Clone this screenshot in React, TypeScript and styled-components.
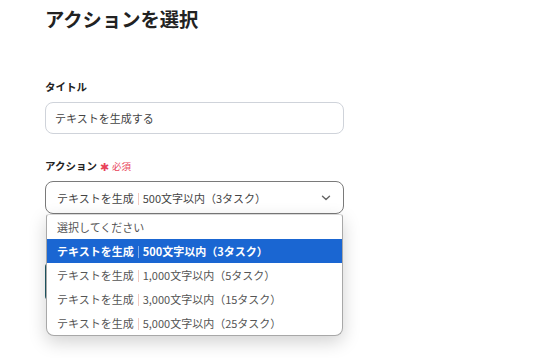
import React from "react";
import styled, { createGlobalStyle } from "styled-components";

const Global = createGlobalStyle`
  html, body { margin: 0; padding: 0; background: #fff; min-height: 100%; }
  body { font-family: "Noto Sans CJK JP", "Noto Sans", sans-serif; color: #222; }
`;

const Page = styled.div`
  padding: 5px 0 0 45px;
  width: 344px;
  min-height: 358px;
  box-sizing: border-box;
`;

const Heading = styled.h1`
  margin: 0;
  font-size: 19.3px;
  line-height: 28px;
  font-weight: 700;
  color: #222;
`;

const Field = styled.div<{ $top: number }>`
  margin-top: ${(p) => p.$top}px;
  display: flex;
  flex-direction: column;
`;

const Label = styled.div`
  font-size: 10.5px;
  line-height: 16px;
  font-weight: 700;
  color: #222;
  display: flex;
  align-items: center;
  gap: 3px;
`;

const Required = styled.span`
  color: #e8435a;
  font-size: 9.5px;
  font-weight: 400;
  display: flex;
  align-items: center;
  gap: 3px;
`;

const Star = styled.span`
  font-size: 11px;
  line-height: 1;
`;

const Input = styled.div`
  margin-top: 7px;
  height: 32px;
  box-sizing: border-box;
  border: 1px solid #cfd3da;
  border-radius: 8px;
  padding: 0 9px;
  display: flex;
  align-items: center;
  font-size: 11px;
  color: #444;
`;

const SelectWrap = styled.div`
  position: relative;
  margin-top: 7px;
`;

const Select = styled.div`
  height: 33px;
  box-sizing: border-box;
  border: 1px solid #7a7a7a;
  border-radius: 8px;
  padding: 0 12px 0 11px;
  display: flex;
  align-items: center;
  justify-content: space-between;
  font-size: 11px;
  color: #444;
`;

const Sep = styled.span<{ $light?: boolean }>`
  display: inline-block;
  width: 1px;
  height: 12px;
  margin: 0 4px;
  vertical-align: -2px;
  background: ${(p) => (p.$light ? "rgba(255,255,255,0.45)" : "#f2c9c0")};
`;

const TealButton = styled.div`
  margin-top: 49px;
  width: 120px;
  height: 37px;
  background: #1f5a66;
  border-radius: 4px;
`;

const Menu = styled.div`
  position: absolute;
  z-index: 5;
  left: 1px;
  right: 1px;
  top: 33px;
  background: #fff;
  border: 1px solid #a8a8a8;
  border-top-color: #d8d8d8;
  border-radius: 3px 3px 8px 8px;
  box-shadow: 0 6px 18px rgba(0, 0, 0, 0.18);
  overflow: hidden;
  display: flex;
  flex-direction: column;
`;

const Option = styled.div<{ $active?: boolean }>`
  height: 24px;
  flex: none;
  display: flex;
  align-items: center;
  padding: 0 10px;
  font-size: 11px;
  font-weight: ${(p) => (p.$active ? 700 : 400)};
  color: ${(p) => (p.$active ? "#fff" : "#555")};
  background: ${(p) => (p.$active ? "#1a66d2" : "transparent")};
`;

const Chevron = () => (
  <svg width="10" height="6" viewBox="0 0 10 6" fill="none">
    <path d="M1.5 1.2 L5 4.6 L8.5 1.2" stroke="#666" strokeWidth="1.4" strokeLinecap="round" strokeLinejoin="round" />
  </svg>
);

const options = [
  "500文字以内（3タスク）",
  "1,000文字以内（5タスク）",
  "3,000文字以内（15タスク）",
  "5,000文字以内（25タスク）",
];

export default function App() {
  return (
    <>
      <Global />
      <Page>
        <Heading>アクションを選択</Heading>
        <Field $top={46}>
          <Label>タイトル</Label>
          <Input>テキストを生成する</Input>
        </Field>
        <Field $top={24}>
          <Label>
            アクション
            <Required>
              <Star>✱</Star>必須
            </Required>
          </Label>
          <SelectWrap>
            <Select>
              <span>
                テキストを生成<Sep />500文字以内（3タスク）
              </span>
              <Chevron />
            </Select>
            <TealButton />
            <Menu>
              <Option>選択してください</Option>
              {options.map((t, i) => (
                <Option key={t} $active={i === 0}>
                  <span>
                    テキストを生成<Sep $light={i === 0} />
                    {t}
                  </span>
                </Option>
              ))}
            </Menu>
          </SelectWrap>
        </Field>
      </Page>
    </>
  );
}
